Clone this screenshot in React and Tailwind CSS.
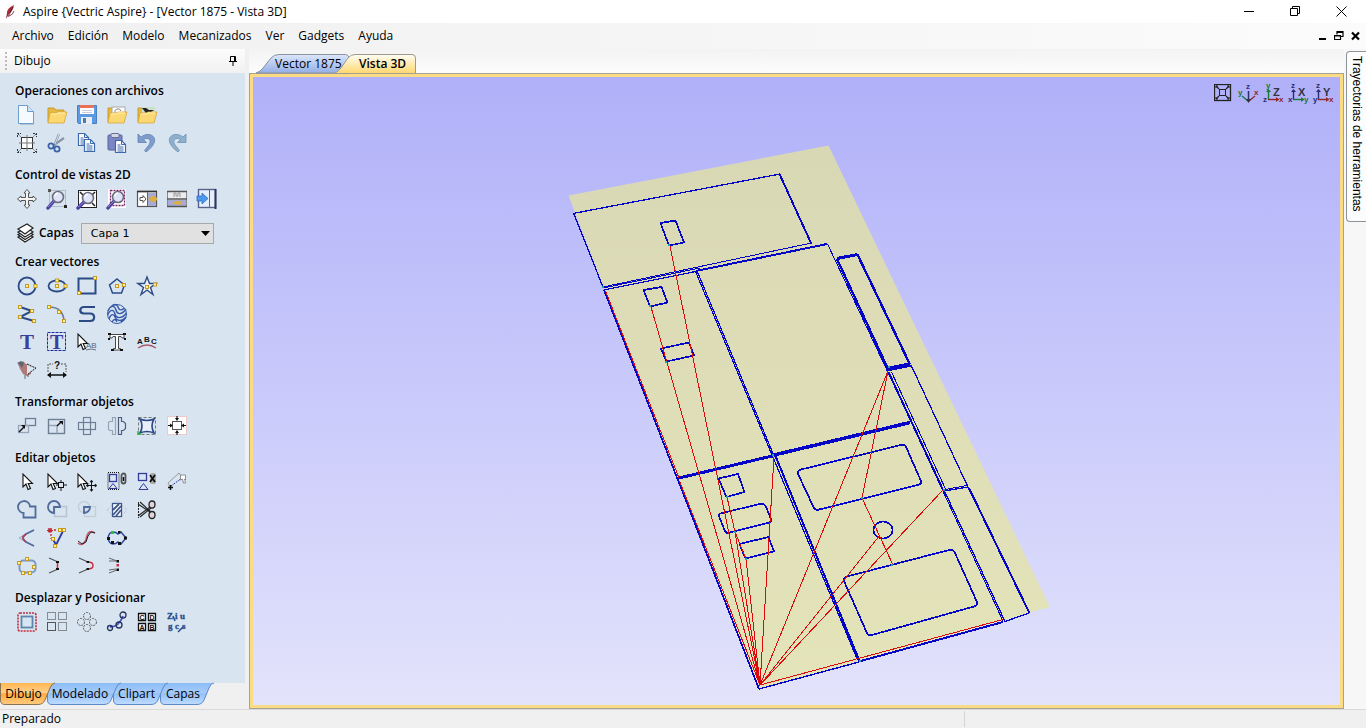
import { useState } from 'react'

const NAVY = '#2b4a86'

function Node({ x, y }) {
  return <rect x={x - 1.5} y={y - 1.5} width="3" height="3" fill="#fff3a0" stroke="#c79a1c" strokeWidth="1" />
}

function Lens({ x = 11, y = 9 }) {
  return (
    <g>
      <path d={`M${x - 4} ${y + 4} L2 20`} stroke="#4b3fa0" strokeWidth="3.4" strokeLinecap="round" />
      <path d={`M${x - 4} ${y + 4} L2 19`} stroke="#8f86d8" strokeWidth="1" />
      <circle cx={x} cy={y} r="5.5" fill="#dfe4f8" stroke="#6c6c7c" strokeWidth="1.6" />
      <path d={`M${x - 3} ${y - 1} a3.5 3.5 0 0 1 3 -3`} stroke="#fff" strokeWidth="1.5" fill="none" />
    </g>
  )
}

const Folder = ({ children }) => (
  <g>
    <path d="M2 4 h6 l2 2 h8 v12 H2z" fill="#e5b93e" stroke="#c99a2c" />
    {children}
    <path d="M4 9 h6 l2 -1 h9 l-3 11 H2z" fill="#fcd873" stroke="#d8a63a" strokeWidth=".8" />
    <path d="M5 10 h5 l2 -1 h7" stroke="#fff0b4" fill="none" />
  </g>
)

const Cursor = ({ x = 0 }) => (
  <path d={`M${x + 7} 3 v13 l3 -3 l2 5.500 l2.500 -1 l-2.300 -5 h4.300 z`} fill="#fff" stroke="#111" strokeWidth="1.1" />
)

const Sheet = ({ x, y }) => (
  <g>
    <path d={`M${x} ${y} h6 l4 4 v8 h-10z`} fill="#fff" stroke="#3c68ae" strokeWidth="1.2" />
    <path d={`M${x + 6} ${y} v4 h4 M${x + 2} ${y + 4.500} h3 M${x + 2} ${y + 6.500} h6 M${x + 2} ${y + 8.500} h6 M${x + 2} ${y + 10.500} h6`} stroke="#3c68ae" strokeWidth="1" fill="none" />
  </g>
)

const ICONS = {
  new: (
    <g>
      <path d="M4 3 h8 l6 6 v12 h-14z" fill="#8ea3b8" opacity=".5" />
      <path d="M2.500 1.500 h9 l6 6 v12 h-15z" fill="#f4faff" stroke="#6d9ecb" />
      <path d="M11.500 1.500 v6 h6" fill="#cfe3f5" stroke="#6d9ecb" />
    </g>
  ),
  open: <Folder />,
  save: (
    <g>
      <path d="M1.500 1.500 h19 v18 h-18 l-1 -1z" fill="#5b9ae0" stroke="#4a7fc0" />
      <rect x="4" y="2" width="14" height="8" fill="#fff" />
      <rect x="4" y="1" width="14" height="3" fill="#ea7058" />
      <path d="M6 6.500 h10 M6 8.500 h10" stroke="#ccd" />
      <rect x="5" y="13" width="11" height="7" fill="#e8edf3" />
      <rect x="7" y="14" width="3" height="5" fill="#5278a8" />
    </g>
  ),
  importVec: (
    <Folder>
      <rect x="6" y="3" width="13" height="8" fill="#fff" stroke="#aaa" />
      <path d="M9 9 a3 3 0 0 1 6 -2" stroke="#888" fill="none" />
    </Folder>
  ),
  importBmp: (
    <Folder>
      <rect x="6" y="3" width="13" height="8" fill="#cfe0c8" />
      <path d="M6 4 l4 0 l3 2 l5 0 l-3 2 l-2 3 l-3 -2z" fill="#222" />
    </Folder>
  ),
  job: (
    <g stroke="#333" fill="none">
      <rect x="5.500" y="5.500" width="11" height="11" fill="#fff" />
      <path d="M11 3 v16 M3 11 h16" strokeWidth="1" stroke="#777" />
      <path d="M1.500 5 v-3.500 h3.500 M1.500 1.500 l3 3 M17 1.500 h3.500 v3.500 M20.500 1.500 l-3 3 M1.500 17 v3.500 h3.500 M1.500 20.500 l3 -3 M17 20.500 h3.500 v-3.500 M20.500 20.500 l-3 -3" strokeDasharray="2 1" />
    </g>
  ),
  cut: (
    <g fill="none">
      <path d="M13 2 L8 14 M18 6 L8 13" stroke="#8b98a8" strokeWidth="2.200" />
      <path d="M13 2 L9 12" stroke="#d8dee6" strokeWidth="1" />
      <circle cx="5" cy="14" r="2.600" stroke="#3a62a8" strokeWidth="1.800" />
      <circle cx="11" cy="17" r="2.600" stroke="#3a62a8" strokeWidth="1.800" />
    </g>
  ),
  copy: (
    <g>
      <Sheet x={2.5} y={1.5} />
      <Sheet x={8.5} y={7.5} />
    </g>
  ),
  paste: (
    <g>
      <rect x="2" y="3" width="14" height="15" rx="1" fill="#7c86c4" stroke="#5560a0" />
      <rect x="5" y="1.500" width="8" height="4" rx="1" fill="#d5d8e4" stroke="#666f98" />
      <Sheet x={9.5} y={8.5} />
    </g>
  ),
  undo: <path d="M2 2 v8.500 h8.500 l-3 -3 c5 -3 9 1 5 6 l-4 5 l1.500 1.500 c11 -8 11 -16 3 -17.500 c-3 -.5 -6 1 -8 2.500z" fill="#7f9dcb" stroke="#6081b6" strokeWidth=".8" />,
  redo: <path d="M20 2 v8.500 h-8.500 l3 -3 c-5 -3 -9 1 -5 6 l4 5 l-1.500 1.500 c-11 -8 -11 -16 -3 -17.500 c3 -.5 6 1 8 2.500z" fill="#8fb0cc" stroke="#6f92b4" strokeWidth=".8" />,
  pan: (
    <path d="M11 1.500 l3 3.500 h-1.500 v4.500 h4.500 v-1.500 l3.500 3 l-3.500 3 v-1.500 h-4.500 v4.500 h1.500 l-3 3.500 l-3 -3.500 h1.500 v-4.500 h-4.500 v1.500 l-3.500 -3 l3.500 -3 v1.500 h4.500 v-4.500 h-1.500z" fill="#f4f4f4" stroke="#555" strokeWidth="1" />
  ),
  zoom: (
    <g>
      <rect x="3.500" y="2.500" width="16" height="16" fill="none" stroke="#8c93a8" strokeDasharray="1 1" />
      <rect x="2" y="1" width="3" height="3" fill="#555" />
      <rect x="18" y="17" width="3" height="3" fill="#222" />
      <Lens x={12} y={9} />
    </g>
  ),
  zoomAll: (
    <g>
      <rect x="2.500" y="2.500" width="18" height="17" fill="#fff" stroke="#222" />
      <path d="M4 4 l3 3 M19 4 l-3 3 M19 18 l-3 -3" stroke="#222" strokeWidth="1.500" />
      <Lens x={12} y={10} />
    </g>
  ),
  zoomSel: (
    <g>
      <rect x="2" y="1" width="18" height="19" fill="#fff" />
      <rect x="4.500" y="2.500" width="14" height="15" fill="none" stroke="#7a2468" strokeDasharray="2 1" strokeWidth="1.300" />
      <Lens x={12} y={9} />
    </g>
  ),
  tileV: (
    <g>
      <rect x="1.500" y="3.500" width="19" height="15" fill="#fff" stroke="#555" strokeWidth="1.200" />
      <rect x="12" y="5" width="8" height="13" fill="#a7abd4" />
      <path d="M1 3.500 h20" stroke="#333" strokeWidth="1.600" />
      <path d="M11.500 4 v14" stroke="#666" />
      <path d="M4 9.500 h3 v-2 l3 3.500 l-3 3.500 v-2 h-3z" fill="none" stroke="#555" />
      <path d="M12 11 l4 -3 h2 l3 2 v2 l-3 2 h-2z" fill="#dcae48" />
    </g>
  ),
  tileH: (
    <g>
      <rect x="1.500" y="3.500" width="19" height="15" fill="#ececf0" stroke="#888" />
      <rect x="2" y="12" width="18" height="6" fill="#a7abd4" />
      <path d="M1 11 h20 M1 3.500 h20 M1 18.500 h20" stroke="#555" strokeWidth="1.500" />
      <path d="M8 9 v-4 h2 v3 h2 v-3 h2 v4" stroke="#999" fill="none" />
      <path d="M6 15 l4 -2 h5 v3.500 h-5z" fill="#dcae48" />
    </g>
  ),
  panel: (
    <g>
      <rect x="2.500" y="1.500" width="17" height="18" fill="#e6eefb" stroke="#56648c" strokeWidth="1.400" />
      <path d="M13.500 2 v17" stroke="#56648c" />
      <path d="M19.500 1 v20" stroke="#2b355c" strokeWidth="2" />
      <path d="M1 8 h5 v-3 l6 5.500 l-6 5.500 v-3 h-5z" fill="#4d97ec" stroke="#2b6cc4" strokeWidth=".8" />
    </g>
  ),
  circle: (
    <g>
      <circle cx="11" cy="11" r="8.500" fill="none" stroke={NAVY} strokeWidth="1.800" />
      <Node x={11} y={11} />
      <Node x={19.5} y={11} />
    </g>
  ),
  ellipse: (
    <g>
      <ellipse cx="11" cy="11" rx="8.500" ry="5.500" fill="none" stroke={NAVY} strokeWidth="1.800" />
      <Node x={11} y={5.5} />
      <Node x={11} y={11} />
      <Node x={19.5} y={11} />
    </g>
  ),
  rect: (
    <g>
      <rect x="2.500" y="3.500" width="17" height="15" fill="none" stroke={NAVY} strokeWidth="2" />
      <Node x={19} y={3} />
      <Node x={3} y={18} />
    </g>
  ),
  polygon: (
    <g>
      <path d="M11 4 l7.500 6 l-3 8 h-9 l-3 -8z" fill="none" stroke={NAVY} strokeWidth="1.500" />
      <Node x={11} y={11} />
      <Node x={18} y={10} />
    </g>
  ),
  star: (
    <g>
      <path d="M11 2 l2.500 6.500 h6.500 l-5.500 4 l2.500 7 l-6 -4.500 l-6 4.500 l2.500 -7 l-5.500 -4 h6.500z" fill="#f0f4fa" stroke={NAVY} strokeWidth="1.400" />
      <Node x={11} y={12} />
      <Node x={19} y={9.5} />
    </g>
  ),
  polyline: (
    <g>
      <path d="M4 4 L16 8 L4 14 L18 18" fill="none" stroke={NAVY} strokeWidth="2" />
      <Node x={4} y={4} />
      <Node x={16} y={8} />
      <Node x={4} y={14} />
      <Node x={18} y={18} />
    </g>
  ),
  arc: (
    <g>
      <path d="M3 4 Q17 4 18 18" fill="none" stroke="#6c7c98" strokeWidth="1.600" />
      <Node x={3} y={4} />
      <Node x={13} y={9} />
      <Node x={18} y={18} />
    </g>
  ),
  curve: <path d="M19 4 H8 C3 4 3 10.500 8 10.500 H14 C19.500 10.500 19.500 18 14 18 H3" fill="none" stroke={NAVY} strokeWidth="2.200" />,
  texture: (
    <g fill="none" stroke="#3559a8" strokeWidth="1.400">
      <path d="M2 8 C5 1 9 3 10 7 S15 13 20 6 M1.500 12 C5 5 8 7 9 11 S15 17 20.500 10 M3 16 C5 10 8 11 9 14 S15 20 20 14 M6 19 q3 -5 5 0 M5 4 C9 -1 12 3 12.500 5 S16 8 18 5 M15 19 l4 -3" />
      <circle cx="11" cy="11" r="9.500" strokeWidth="1" />
    </g>
  ),
  text: <text x="4" y="18" fontFamily="Liberation Serif" fontWeight="bold" fontSize="21" fill="#3a3f9c">T</text>,
  textBox: (
    <g>
      <rect x="1.500" y="1.500" width="18" height="18" fill="none" stroke="#1c2a98" strokeDasharray="3 1" />
      <text x="4" y="18" fontFamily="Liberation Serif" fontWeight="bold" fontSize="20" fill="#3a3f9c">T</text>
    </g>
  ),
  textSel: (
    <g>
      <Cursor x={-5} />
      <text x="10" y="17" fontFamily="Liberation Sans" fontSize="8" fill="#567">AB</text>
      <path d="M10 19 q5 -2 10 0" stroke="#678" fill="none" />
    </g>
  ),
  textNodes: (
    <g>
      <path d="M4 3.500 h14 v3.500 h-2 l-1 -1.500 h-2.500 v12 h2 v1.500 h-7 v-1.500 h2 v-12 h-2.500 l-1 1.500 h-2z" fill="#fff" stroke="#444" />
      <path d="M2 2 h3 v2 h-3z M17 2 h3 v2 h-3z M2 7 h2 v2 h-2z M18 7 h2 v2 h-2z M5 18 h3 v2 h-3z M14 18 h3 v2 h-3z" fill="#111" />
    </g>
  ),
  textArc: (
    <g fontFamily="Liberation Sans" fontWeight="bold" fontSize="8" fill="#111">
      <text x="1" y="13">A</text>
      <text x="8" y="11">B</text>
      <text x="15" y="13">C</text>
      <path d="M2 17 q9 -6 18 0" stroke="#a85a6c" strokeWidth="1.500" fill="none" />
    </g>
  ),
  trace: (
    <g>
      <path d="M2 5 l3 -1 l2 -2 l3 3 l5 1 v9 l-4 2 l-4 -2 l-3 -5z" fill="#b07a78" />
      <path d="M1 4 l4 -2 l3 2 l-2 5 l-2 -3z" fill="#5f6470" />
      <path d="M11 5 l4 2 l5 2 l-4 3 l-5 4" fill="#dbe4ee" stroke="#111" strokeDasharray="2 1" />
      <path d="M9 16 v4 M12 15 v3" stroke="#666" />
    </g>
  ),
  dimension: (
    <g>
      <path d="M2 13 v-8 h5 M15 5 h5 v8" stroke="#555" strokeDasharray="2 1" fill="none" />
      <text x="8" y="10" fontFamily="Liberation Sans" fontWeight="bold" fontSize="10" fill="#111">?</text>
      <path d="M2 16 h18" stroke="#111" strokeWidth="1.500" />
      <path d="M1 16 l4 -3 v6z M21 16 l-4 -3 v6z" fill="#111" />
    </g>
  ),
  move: (
    <g fill="none" stroke="#6e7c94" strokeWidth="1.300">
      <rect x="9.500" y="3.500" width="10" height="7" />
      <rect x="2.500" y="10.500" width="10" height="7" stroke="#98a4b6" />
      <path d="M3 17 l5 -5" stroke="#111" strokeWidth="1.500" />
      <path d="M9 10 v4 l-4 -4z" fill="#111" stroke="none" />
    </g>
  ),
  size: (
    <g fill="none" stroke="#6e7c94" strokeWidth="1.400">
      <rect x="2.500" y="4.500" width="16" height="14" />
      <path d="M3 10.500 h8 v8" stroke="#98a4b6" />
      <path d="M11 11 l4 -4" stroke="#111" strokeWidth="1.500" />
      <path d="M17 6 v4 l-4 -4z" fill="#111" stroke="none" />
    </g>
  ),
  rotate: (
    <g fill="none" stroke="#6e7c94" strokeWidth="1.200">
      <rect x="7.500" y="2.500" width="7" height="17" />
      <rect x="2.500" y="7.500" width="17" height="7" />
    </g>
  ),
  mirror: (
    <g fill="none" stroke="#98a4b6" strokeWidth="1.200">
      <path d="M9.500 2.500 v17 h-3 v-4 h-3 l-1 -1 v-7 l1 -1 h3 v-4z" />
      <path d="M12.500 2.500 v17 h3 v-4 h2 l2 -2 v-5 l-2 -2 h-2 v-4z" stroke="#4f5c7c" />
    </g>
  ),
  distort: (
    <g fill="none">
      <rect x="2.500" y="2.500" width="17" height="17" stroke="#777" strokeDasharray="3 2" />
      <path d="M4 4 q7 3 14 0 q-4 7 0 14 q-7 -3 -14 0 q4 -7 0 -14z" fill="#e8eefa" stroke={NAVY} strokeWidth="1.600" />
      <path d="M2 19 h3 M2 16 v4" stroke="#38b048" strokeWidth="1.500" />
    </g>
  ),
  center: (
    <g>
      <rect x="1.500" y="1.500" width="19" height="18" fill="#fff" stroke="#eccaca" />
      <rect x="6.500" y="6.500" width="9" height="8" fill="none" stroke="#555" />
      <path d="M11 1 v3 M11 17 v3 M2 10.500 h3 M17 10.500 h3" stroke="#111" strokeWidth="1.200" />
      <path d="M9 3 h4 l-2 3z M9 18 h4 l-2 -3z M4 8.500 v4 l3 -2z M18 8.500 v4 l-3 -2z" fill="#111" />
    </g>
  ),
  select: <Cursor />,
  nodeEdit: (
    <g fill="none" stroke="#111">
      <Cursor x={-5} />
      <rect x="12.500" y="11.500" width="5" height="5" />
      <path d="M15 9 v3 M15 17 v3 M10 14 h3 M18 14 h3" />
    </g>
  ),
  interactive: (
    <g fill="none" stroke="#111">
      <Cursor x={-5} />
      <path d="M15.500 10 v10 M11 14.500 h9" />
      <path d="M14 11 h3 l-1.500 -2z M14 18.500 h3 l-1.500 2z M12 13 v3 l-2 -1.500z M19 13 v3 l2 -1.500z" fill="#111" strokeWidth=".5" />
    </g>
  ),
  group: (
    <g fill="none">
      <path d="M2 1.500 h11 v17 h-11z" stroke="#111" strokeDasharray="1 1" />
      <rect x="3.500" y="3.500" width="7" height="7" stroke="#343a9c" strokeWidth="1.300" />
      <path d="M3 17.500 h8 l-4 -5z" stroke="#343a9c" />
      <rect x="15.500" y="2.500" width="4" height="10" rx="2" stroke="#555" strokeWidth="1.800" />
      <path d="M17.500 6 v4" stroke="#111" strokeWidth="1.500" />
    </g>
  ),
  ungroup: (
    <g fill="none">
      <rect x="2.500" y="2.500" width="8" height="7" stroke="#343a9c" strokeWidth="1.300" />
      <path d="M3 18.500 h9 l-4.500 -6z" stroke="#343a9c" />
      <rect x="14" y="2" width="6" height="11" rx="2" fill="#aaa" />
      <path d="M14 4 l5 7 M19 4 l-5 7" stroke="#111" strokeWidth="1.800" />
    </g>
  ),
  measure: (
    <g fill="none">
      <path d="M2 12 L13 2 M4 16 L2 12 M13 2 L16 6" stroke="#999" />
      <path d="M5 15 L16 7" stroke="#343a9c" strokeDasharray="2 1" />
      <path d="M2 16.500 h5 M4.500 14 v5" stroke="#111" strokeWidth="1.500" />
      <path d="M14.500 4 h5 v5 l-1 -1 l1 4 h-2 l-1 -4 l-2 1z" fill="#fff" stroke="#777" strokeWidth=".8" />
    </g>
  ),
  weld: <path d="M8.500 14 a6 6 0 1 1 5.500 -6.500 h5.500 v11 h-12 v-4.500" fill="none" stroke="#4f6c9c" strokeWidth="1.800" />,
  subtract: (
    <g fill="none">
      <rect x="8.500" y="7.500" width="12" height="10" stroke="#b8c2d0" strokeWidth="1.500" />
      <path d="M8 14 a6 6 0 1 1 6 -6 h-6z" stroke="#4f6c9c" strokeWidth="1.800" />
    </g>
  ),
  overlap: (
    <g fill="none">
      <circle cx="8" cy="8" r="5.500" stroke="#c4ced9" strokeWidth="1.400" />
      <rect x="8.500" y="7.500" width="11" height="10" stroke="#c4ced9" strokeWidth="1.400" />
      <path d="M8 8 h6 q0 5 -6 6z" stroke="#4f6c9c" strokeWidth="1.800" fill="#dde" />
    </g>
  ),
  trimHatch: (
    <g fill="none" stroke="#3e578a">
      <path d="M1 11 l10 -10 l10 10 l-10 10z" stroke="#bcc6d4" strokeDasharray="3 2" />
      <rect x="6.500" y="4.500" width="9" height="13" fill="#fff" strokeWidth="1.300" />
      <path d="M7 11 l6 -6 M7 16 l8 -9 M10 17 l5 -6" strokeWidth="1.800" />
    </g>
  ),
  scissors: (
    <g fill="none" stroke="#222">
      <path d="M2.500 3 v16" strokeDasharray="2 1" />
      <path d="M2 5 L14 13 M4 3 L15 13 M2 17 L14 8 M4 18 L15 9" strokeWidth="1.100" />
      <ellipse cx="16" cy="16" rx="3" ry="3.500" fill="#e4d4d8" strokeWidth="1.300" />
      <ellipse cx="16" cy="5.500" rx="3" ry="3.500" fill="#e4d4d8" strokeWidth="1.300" />
    </g>
  ),
  fillet: (
    <g fill="none">
      <path d="M3 11 L18 3 M3 11 L18 19" stroke="#a8b2c0" strokeWidth="1.300" />
      <path d="M18 3 L10 7 Q4 11 10 15 L18 19" stroke="#4f6c9c" strokeWidth="1.800" />
      <path d="M10 7 Q4 11 10 15" stroke="#c03c54" strokeWidth="1.600" />
    </g>
  ),
  extend: (
    <g fill="none">
      <path d="M8 3 h5 M5 7 v5" stroke="#c02834" strokeDasharray="2 2" strokeWidth="1.300" />
      <path d="M17 4 L10 18 L7 12" stroke="#2f389c" strokeWidth="1.800" />
      <path d="M2 1.500 l4 3.500 M6 1.500 l-4 3.500 M4 1 v5 M1 3.500 h6" stroke="#c02834" strokeWidth="1.200" />
      <Node x={14} y={3} />
      <Node x={18} y={3} />
      <Node x={7} y={12} />
      <Node x={9} y={19} />
    </g>
  ),
  fit: (
    <g fill="none">
      <path d="M2 16 q4 4 8 -3 q2 -12 9 -7" stroke="#c0566a" strokeWidth="1.600" />
      <path d="M2 14 l4 3 l4 -2 l2 -6 l3 -4 l4 1" stroke="#222" />
    </g>
  ),
  join: (
    <g>
      <path d="M2 11 q1 -6 5 -6 q3 0 5 2 l3 -2 l5 6 l-5 6 l-3 -2 q-2 2 -5 2 q-4 0 -5 -6z" fill="none" stroke="#2f49a0" strokeWidth="1.500" />
      <path d="M1 10 h3 v3 h-3z M12 4 h2.500 v2.500 h-2.500z M18 9.500 h3 v3 h-3z M12 15 h3 v3 h-3z M5 14 h3 v3 h-3z" fill="#111" />
      <rect x="5" y="4" width="3" height="3" fill="#26c83a" />
    </g>
  ),
  close: (
    <g>
      <rect x="3.500" y="5.500" width="16" height="12" rx="4" fill="none" stroke="#7c98c4" strokeWidth="2" />
      <Node x={11} y={4} />
      <Node x={3} y={8} />
      <Node x={18} y={12} />
      <Node x={7} y={18} />
      <Node x={14} y={18} />
    </g>
  ),
  spanLine: (
    <g fill="none">
      <path d="M3 3 l8 3.500 M3 18 l8 -3.500" stroke="#555" strokeWidth="1.300" />
      <path d="M11.500 7 v7" stroke="#d02c44" strokeWidth="1.500" />
      <path d="M10 6 h3 v2 h-3z M10 13 h3 v2 h-3z" fill="#111" />
    </g>
  ),
  spanArc: (
    <g fill="none">
      <path d="M3 3 l9 4 M3 18 l9 -4" stroke="#555" strokeWidth="1.300" />
      <path d="M12 7 q5 0 5 3.500 q0 3.500 -5 3.500" stroke="#d02c44" strokeWidth="1.500" />
      <path d="M10.500 6 h2.500 v2 h-2.500z M10.500 13 h2.500 v2 h-2.500z" fill="#111" />
    </g>
  ),
  spanMid: (
    <g fill="none">
      <path d="M3 3 l8 3 M3 6 l7 0 M3 18 l8 -3 M3 15 l7 -1" stroke="#666" />
      <path d="M10.500 5 h2.500 v2.500 h-2.500z M10.500 13.500 h2.500 v2.500 h-2.500z" fill="#111" />
      <path d="M10.500 9 h2.500 v2.500 h-2.500z" fill="#d02c44" />
    </g>
  ),
  offset: (
    <g fill="none">
      <rect x="2" y="2" width="18" height="18" rx="2" stroke="#c02c3c" strokeWidth="1.600" strokeDasharray="2 1" />
      <rect x="5.500" y="5.500" width="11" height="11" fill="#d5e6f2" stroke="#5e86ac" strokeWidth="1.800" />
    </g>
  ),
  array: (
    <g fill="none">
      <path d="M1.500 1.500 h8 v7 h-8z M12.500 1.500 h8 v7 h-8z M12.500 11.500 h8 v8 h-8z" strokeDasharray="1 1" stroke="#333" />
      <rect x="1.500" y="11.500" width="8" height="8" stroke="#555" />
    </g>
  ),
  circArray: (
    <g fill="none" stroke="#555" strokeDasharray="2 1">
      <circle cx="11" cy="5" r="3.500" />
      <circle cx="5" cy="11" r="3.500" />
      <circle cx="17" cy="11" r="3.500" />
      <circle cx="11" cy="17" r="3.500" />
    </g>
  ),
  pathCopy: (
    <g fill="none" stroke="#26345c" strokeWidth="1.300">
      <path d="M4 16 Q13 16 17 5" stroke="#4b52c8" strokeWidth="1.800" />
      <circle cx="4" cy="17" r="2.500" />
      <circle cx="13" cy="14" r="3" />
      <circle cx="17" cy="4" r="3" />
    </g>
  ),
  nest: (
    <g>
      <path d="M2.500 2.500 h7 v7 h-7z M12.500 2.500 h7 v7 h-7z M2.500 12.500 h7 v7 h-7z M12.500 12.500 h7 v7 h-7z" fill="#fff" stroke="#111" strokeWidth="1.300" />
      <g fontFamily="Liberation Sans" fontWeight="bold" fontSize="7" fill="#111" textAnchor="middle">
        <text x="6" y="9">C</text>
        <text x="16" y="9">D</text>
        <text x="6" y="19">A</text>
        <text x="16" y="19">B</text>
      </g>
    </g>
  ),
  nesting: (
    <g fontFamily="Liberation Serif" fontWeight="bold" fontSize="9" fill="#2b4a86" stroke="#2b4a86" strokeWidth=".3">
      <text x="1" y="8">Z</text>
      <text x="9" y="8">i</text>
      <text x="14" y="8">u</text>
      <text x="2" y="18">g</text>
      <text x="9" y="18">c</text>
      <text x="16" y="18">s</text>
      <path d="M12 21 l5 -5 M7 5 l2 5" strokeWidth="1.500" />
    </g>
  ),
}

const SECTIONS = [
  {
    title: 'Operaciones con archivos',
    rows: [
      ['new', 'open', 'save', 'importVec', 'importBmp'],
      ['job', 'cut', 'copy', 'paste', 'undo', 'redo'],
    ],
  },
  { title: 'Control de vistas 2D', rows: [['pan', 'zoom', 'zoomAll', 'zoomSel', 'tileV', 'tileH', 'panel']], layers: true },
  {
    title: 'Crear vectores',
    rows: [
      ['circle', 'ellipse', 'rect', 'polygon', 'star'],
      ['polyline', 'arc', 'curve', 'texture'],
      ['text', 'textBox', 'textSel', 'textNodes', 'textArc'],
      ['trace', 'dimension'],
    ],
  },
  { title: 'Transformar objetos', rows: [['move', 'size', 'rotate', 'mirror', 'distort', 'center']] },
  {
    title: 'Editar objetos',
    rows: [
      ['select', 'nodeEdit', 'interactive', 'group', 'ungroup', 'measure'],
      ['weld', 'subtract', 'overlap', 'trimHatch', 'scissors'],
      ['fillet', 'extend', 'fit', 'join'],
      ['close', 'spanLine', 'spanArc', 'spanMid'],
    ],
  },
  { title: 'Desplazar y Posicionar', rows: [['offset', 'array', 'circArray', 'pathCopy', 'nest', 'nesting']] },
]

const MENUS = ['Archivo', 'Edición', 'Modelo', 'Mecanizados', 'Ver', 'Gadgets', 'Ayuda']

const DOCK_TABS = [
  { label: 'Dibujo', w: 47, cls: 'w-[47px] z-40' },
  { label: 'Modelado', w: 66, cls: 'w-[66px] z-30' },
  { label: 'Clipart', w: 47, cls: 'w-[47px] z-20' },
  { label: 'Capas', w: 46, cls: 'w-[46px] z-10' },
]

function ToolSection({ title, rows, layers }) {
  return (
    <section className="mb-2">
      <h2 className="h-5 pl-[3px] text-xs leading-5 font-semibold">{title}</h2>
      {rows.map(row => (
        <div key={row[0]} className="flex">
          {row.map(name => (
            <button key={name} type="button" aria-label={name} className="flex h-7 w-[30px] items-center justify-center">
              <svg width="22" height="22" viewBox="0 0 22 22" fill="none">{ICONS[name]}</svg>
            </button>
          ))}
        </div>
      ))}
      {layers && (
        <div className="mt-[9px] flex items-center pl-1">
          <svg width="20" height="22" viewBox="0 0 20 22" fill="#fff" stroke="#222" strokeWidth="1.2">
            <path d="M2 15 l9 -4 l6 4 l-8 5z" />
            <path d="M2 12.500 l9 -4 l6 4 l-8 5z" />
            <path d="M2 10 l9 -4 l6 4 l-8 5z" />
            <path d="M2 7 l9 -5 l6 4 l-8 6z" />
          </svg>
          <label htmlFor="layer" className="ml-[3px] text-xs font-semibold">Capas</label>
          <div className="relative ml-[7px]">
            <select
              id="layer"
              className="block h-[21px] w-[133px] appearance-none border border-[#a8a8a8] bg-[#e1e1e1] pl-[9px] font-['DejaVu_Sans',sans-serif] text-[11px] leading-[19px]"
            >
              <option>Capa 1</option>
            </select>
            <svg className="pointer-events-none absolute top-2 right-1" width="9" height="5" viewBox="0 0 9 5">
              <path d="M0 0 h9 l-4.500 5z" fill="#000" />
            </svg>
          </div>
        </div>
      )}
    </section>
  )
}

function DockTab({ label, w, cls, active, onClick }) {
  const outline = `M.5 0 V17 Q.5 21.500 5 21.500 H${w - 9} Q${w - 4} 21.500 ${w - 2} 17 L${w + 3} 5 Q${w + 5} 0 ${w + 8} 0`
  const fill = active ? 'dockActive' : 'dockIdle'
  return (
    <button type="button" onClick={onClick} className={`relative h-[22px] shrink-0 text-xs leading-5 ${cls}`}>
      <svg className="absolute top-0 left-0 overflow-visible" width={w} height="22">
        <defs>
          <linearGradient id={fill} x2="0" y2="1">
            <stop offset="0" stopColor={active ? '#ffb74f' : '#8cbcf8'} />
            <stop offset=".45" stopColor={active ? '#ffcf8c' : '#a6cbfb'} />
            <stop offset=".5" stopColor={active ? '#ffab3e' : '#93c1fa'} />
            <stop offset="1" stopColor={active ? '#ffcb80' : '#c0dcff'} />
          </linearGradient>
        </defs>
        <path d={outline} fill={`url(#${fill})`} stroke={active ? '#8a7350' : '#5c8bc8'} />
      </svg>
      <span className="relative">{label}</span>
    </button>
  )
}

function Axis({ a, b, c, big, ca, cb }) {
  return (
    <svg width="24" height="24" viewBox="0 0 24 24" fontFamily="Liberation Sans" fontWeight="bold" fontSize="8">
      <path d="M7.500 19 V9" stroke={ca} strokeWidth="1.400" />
      <path d="M7 18.500 H18" stroke={cb} strokeWidth="1.400" />
      <path d="M5 11 h5 l-2.500 -3z" fill={ca} />
      <path d="M15 16 v5 l3 -2.500z" fill={cb} />
      <text x="5" y="7" fill={ca}>{a}</text>
      <text x="2" y="21" fill="#2c2c70">{b}</text>
      <text x="18" y="21" fill={cb}>{c}</text>
      <text x="12" y="15" fontSize="11" fill="#334">{big}</text>
    </svg>
  )
}

function ViewTools() {
  const cls = 'flex h-6 w-[25px] items-center justify-center'
  return (
    <div className="absolute top-1 right-[5px] flex">
      <button type="button" aria-label="fit" className={cls}>
        <svg width="18" height="18" viewBox="0 0 18 18" fill="none" stroke="#222">
          <rect x=".5" y=".5" width="16" height="16" strokeWidth="1.300" />
          <rect x="5.500" y="5.500" width="6" height="6" />
          <path d="M2 2 l3 3 M15 2 l-3 3 M2 15 l3 -3 M15 15 l-3 -3" strokeWidth="1.300" />
          <path d="M2 4 v-2 h2 M13 2 h2 v2 M2 13 v2 h2 M13 15 h2 v-2" />
        </svg>
      </button>
      <button type="button" aria-label="iso" className={cls}>
        <svg width="24" height="24" viewBox="0 0 24 24" fontFamily="Liberation Sans" fontWeight="bold" fontSize="8" fill="none">
          <path d="M12.500 19 V10" stroke="#2c2c70" strokeWidth="1.500" />
          <path d="M12 20 L6 15" stroke="#187838" strokeWidth="1.300" />
          <path d="M13 20 L19 15" stroke="#902828" strokeWidth="1.300" />
          <path d="M10 18 h5 l-2.500 4z" fill="#334" />
          <text x="10" y="8" fill="#2c2c90">z</text>
          <text x="2" y="14" fill="#187838">y</text>
          <text x="18" y="14" fill="#902828">x</text>
        </svg>
      </button>
      <button type="button" aria-label="z view" className={cls}><Axis a="y" b="z" c="x" big="Z" ca="#187838" cb="#902828" /></button>
      <button type="button" aria-label="x view" className={cls}><Axis a="z" b="x" c="y" big="X" ca="#2c2c70" cb="#187838" /></button>
      <button type="button" aria-label="y view" className={cls}><Axis a="z" b="y" c="x" big="Y" ca="#2c2c70" cb="#902828" /></button>
    </div>
  )
}

// model space is drawn in window coordinates
function Scene() {
  return (
    <svg className="absolute inset-0 h-full w-full" viewBox="253 77 1087 628" fill="none">
      <defs>
        <linearGradient id="board" x2="0" y2="1">
          <stop offset="0" stopColor="#d9d8b5" />
          <stop offset="1" stopColor="#e4e4ba" />
        </linearGradient>
      </defs>
      <path d="M568.500 195.500 L828.500 145.500 L1050 607 L758.500 689.500z" fill="url(#board)" />
      <g shapeRendering="crispEdges" strokeWidth="1" stroke="#0505c8">
        <path d="M573 213.500 L780 174 M573.500 213 L603 287" strokeWidth="1.300" />
        <path d="M780 174 L811.500 243 M779 174 L810.500 243 M811.500 243 L603 287 M603 288 L700 268" />
        <path d="M604 290 L695.500 271.500 L772 455 M697.500 272 L774 456" strokeWidth="1.200" />
        <path d="M696 271 L827 244" strokeWidth="2" />
        <path d="M604 290 L677.500 479" strokeWidth="1.700" />
        <path d="M827.500 244 L911 421.500 M837 258.500 L857.500 254.500" />
        <path d="M837 258.500 L857.500 254.500" strokeWidth="3" />
        <path d="M857.500 254.500 L910 364.500" strokeWidth="2.400" />
        <path d="M837 259 L888.500 370" strokeWidth="2.400" />
        <path d="M888 369 L910.500 364.500" strokeWidth="4.500" />
        <path d="M889 372 L944 491 M891.500 372 L945.500 489" />
        <path d="M911 365 L967.500 486 L1029 613 L1005 621.500 L944.500 491 L968 487" strokeWidth="1.300" />
        <path d="M969.500 488 L1030 613 M945 489.500 L967 485.500" />
        <path d="M911 422 L1003 621 M887 370 L911 422" />
        <path d="M677 478.500 L772 456" strokeWidth="3" />
        <path d="M774 455 L910 422.500" strokeWidth="3.500" />
        <path d="M678 480 L759 689" strokeWidth="1.700" />
        <path d="M772.500 456 L857.500 660" strokeWidth="1.200" />
        <path d="M775.500 456 L859.500 661" strokeWidth="2" />
        <path d="M759 689 L859 662" strokeWidth="1.400" />
        <path d="M859 661.500 L1003 622" strokeWidth="2" />

        <g strokeWidth="1.700" strokeLinejoin="round">
          <path d="M660.500 223 L675.500 220.500 L684 242.500 L669 245.500z" />
          <path d="M643.500 290 L661.500 287 L667.500 302.500 L650 306.500z" />
          <path d="M661 348.500 L689 342.500 L694 355.500 L666.500 361.500z" />
          <path d="M718.500 478.500 L738 474 L744.500 492 L726.500 497z" />
          <path d="M722 513 L760 504 Q764 503 766 507 L771 519 Q772 522 768 523 L730 532.500 Q726 534 724.500 530 L719 516 Q718 514 722 513z" />
          <path d="M739.500 544 L768.500 537 L774 551.500 L745.500 558.500z" />
          <path d="M801 469.500 L901 445 Q905 444 906.500 448 L921 481 Q922 484 918 485 L819 509.500 Q815 511 813.500 507 L798 474 Q797 471 801 469.500z" />
          <path d="M847 576.500 L949 550 Q953 549 955 553 L977 602 Q978 605 974 606.500 L872 635 Q868 636 866.500 632 L844 581 Q843 578 847 576.500z" />
          <ellipse cx="883" cy="530" rx="9.500" ry="8.500" />
        </g>
      </g>
      <g shapeRendering="crispEdges" stroke="#dc0a0a" strokeWidth="1">
        <path d="M605.500 291 L679 478 M679.500 481 L760 685" />
        <path d="M670 246 L760 685 M651 307 L760 685 M727 497 L735 532 L746 559 L760 685 M735 532 L760 685" />
        <path d="M774 457 L760 685 L888 371 L862 498 L893 565 M880 535 L760 685 M943 490 L760 685 L1003 619.500" />
      </g>
      <g fill="#18a8a8">
        <path d="M668 244 h2 v2 h-2z M602 286 h2 v2 h-2z M649 305 h2 v2 h-2z M665 361 h2 v2 h-2z M726 496 h2 v2 h-2z M734 531 h2 v2 h-2z M745 558 h2 v2 h-2z" />
        <path d="M772 454 h2 v2 h-2z M888 366 h2 v2 h-2z M943 489 h2 v2 h-2z M861 497 h2 v2 h-2z M891 564 h2 v2 h-2z M859 660 h2 v2 h-2z" />
      </g>
    </svg>
  )
}

export default function App() {
  const [dock, setDock] = useState('Dibujo')

  return (
    <div className="flex h-screen flex-col overflow-hidden bg-[#f0f0f0] font-['Open_Sans','Noto_Sans',sans-serif] text-xs text-black">
      <header className="flex h-[23px] shrink-0 items-center bg-white">
        <svg className="ml-[5px]" width="12" height="16" viewBox="0 0 12 16">
          <path d="M9 1 Q2 4 2 9 L1 15 L4 10 Q8 7 9 1z" fill="#a82838" />
          <path d="M8 3 L3 13 M9 7 Q8 11 4 12" stroke="#5c1828" fill="none" strokeWidth=".8" />
        </svg>
        <h1 className="ml-[6px] text-xs">Aspire {'{Vectric Aspire}'} - [Vector 1875 - Vista 3D]</h1>
        <div className="mr-[2px] ml-auto flex h-full">
          <button type="button" aria-label="minimize" className="flex w-[46px] items-center justify-center">
            <svg width="11" height="11" stroke="#000"><path d="M0 5.500 h10" /></svg>
          </button>
          <button type="button" aria-label="restore" className="flex w-[46px] items-center justify-center">
            <svg width="11" height="11" stroke="#000" fill="none"><path d="M.5 2.500 h7 v7 h-7z M2.500 2 v-1.500 h7 v7 h-2" /></svg>
          </button>
          <button type="button" aria-label="close" className="flex w-[46px] items-center justify-center">
            <svg width="11" height="11" stroke="#000"><path d="M.5 .5 l10 10 M10.500 .5 l-10 10" /></svg>
          </button>
        </div>
      </header>

      <nav className="flex h-[26px] shrink-0 items-center gap-3.5 bg-linear-to-r from-[#f0f0f0] to-[#fbfbfb] pl-3">
        {MENUS.map(m => (
          <button key={m} type="button">{m}</button>
        ))}
        <div className="mr-[6px] ml-auto flex items-center gap-[7px]">
          <button type="button" aria-label="minimize document">
            <svg width="8" height="10"><path d="M0 8 h7" stroke="#000" strokeWidth="2" /></svg>
          </button>
          <button type="button" aria-label="restore document">
            <svg width="10" height="10" fill="none" stroke="#000"><path d="M.5 4.500 h6 v4 h-6z M.5 5 h6 M3 3.500 v-3 h6 v5 h-2 M3 1.500 h6" strokeWidth="1.200" /></svg>
          </button>
          <button type="button" aria-label="close document">
            <svg width="9" height="10"><path d="M1 1.500 l7 7 M8 1.500 l-7 7" stroke="#000" strokeWidth="2.200" /></svg>
          </button>
        </div>
      </nav>

      <div className="flex min-h-0 flex-1">
        <aside className="flex w-[245px] shrink-0 flex-col">
          <div className="flex h-6 shrink-0 items-center bg-linear-to-b from-[#fcfcfc] to-[#f1f1f1] pr-2">
            <div className="ml-[5px] h-[18px] border-l-2 border-dotted border-[#bbb]" />
            <span className="ml-[7px]">Dibujo</span>
            <button type="button" aria-label="pin" className="ml-auto">
              <svg width="8" height="11" fill="none" stroke="#000"><path d="M1.500 5 v-4.500 h5 v4.500 M0 5.500 h8 M4 6 v4 M5.500 1 v4" /></svg>
            </button>
          </div>
          <div className="min-h-0 flex-1 overflow-hidden bg-[#d8e5f1] px-3 pt-2">
            {SECTIONS.map(s => (
              <ToolSection key={s.title} {...s} />
            ))}
          </div>
          <div className="flex h-[26px] shrink-0">
            {DOCK_TABS.map(t => (
              <DockTab key={t.label} {...t} active={t.label === dock} onClick={() => setDock(t.label)} />
            ))}
          </div>
        </aside>

        <main className="ml-1 flex min-w-0 flex-1 flex-col">
          <div className="flex h-6 shrink-0 items-end bg-linear-to-b from-[#f3f3f3] to-[#fcfcfc] pl-[7px]">
            <button type="button" className="relative h-[19px] w-[79px] pl-[19px] text-left leading-[18px] whitespace-nowrap">
              <svg className="absolute top-0 left-0 overflow-visible" width="79" height="19">
                <defs>
                  <linearGradient id="tabIdle" x2="0" y2="1">
                    <stop offset="0" stopColor="#dce6fa" />
                    <stop offset="1" stopColor="#93aee6" />
                  </linearGradient>
                </defs>
                <path d="M0 19 Q4 18 7 14 L15 4 Q18 .5 23 .5 H89 Q93 .5 93 5 V19z" fill="url(#tabIdle)" stroke="#8c93a0" />
              </svg>
              <span className="relative">Vector 1875</span>
            </button>
            <button type="button" className="relative h-[19px] w-[82px] pl-[24px] text-left leading-[18px] font-semibold whitespace-nowrap">
              <svg className="absolute top-0 left-0 overflow-visible" width="82" height="19">
                <defs>
                  <linearGradient id="tabActive" x2="0" y2="1">
                    <stop offset="0" stopColor="#fffdf4" />
                    <stop offset="1" stopColor="#ffd871" />
                  </linearGradient>
                </defs>
                <path d="M0 19 Q3 18 6 14 L13 4 Q16 .5 20 .5 H77 Q80.500 .5 80.500 4 V19" fill="url(#tabActive)" stroke="#9a9a90" />
              </svg>
              <span className="relative">Vista 3D</span>
            </button>
          </div>
          <div className="flex min-h-0 flex-1 border border-[#a5a394] bg-[#fbdb83] p-[3px]">
            <div className="relative min-h-0 flex-1 bg-linear-to-b from-[#b0b0f9] to-[#e3e3fb]">
              <Scene />
              <ViewTools />
            </div>
          </div>
        </main>

        <aside className="w-[22px] shrink-0 bg-[#f7f7f7] pt-[2px] pl-[2px]">
          <button
            type="button"
            className="flex h-[171px] w-5 items-start rounded-l-sm border border-r-0 border-[#8e939a] bg-[#fcfcfc] pt-1 font-['Liberation_Sans',sans-serif] text-xs leading-[18px] whitespace-nowrap [writing-mode:vertical-rl]"
          >
            Trayectorias de herramientas
          </button>
        </aside>
      </div>

      <footer className="flex h-[19px] shrink-0 items-center border-t border-[#dadada] pl-[2px]">
        <span className="flex-1">Preparado</span>
        <span className="h-4 w-[402px] border-l border-[#d4d4d4]" />
      </footer>
    </div>
  )
}
